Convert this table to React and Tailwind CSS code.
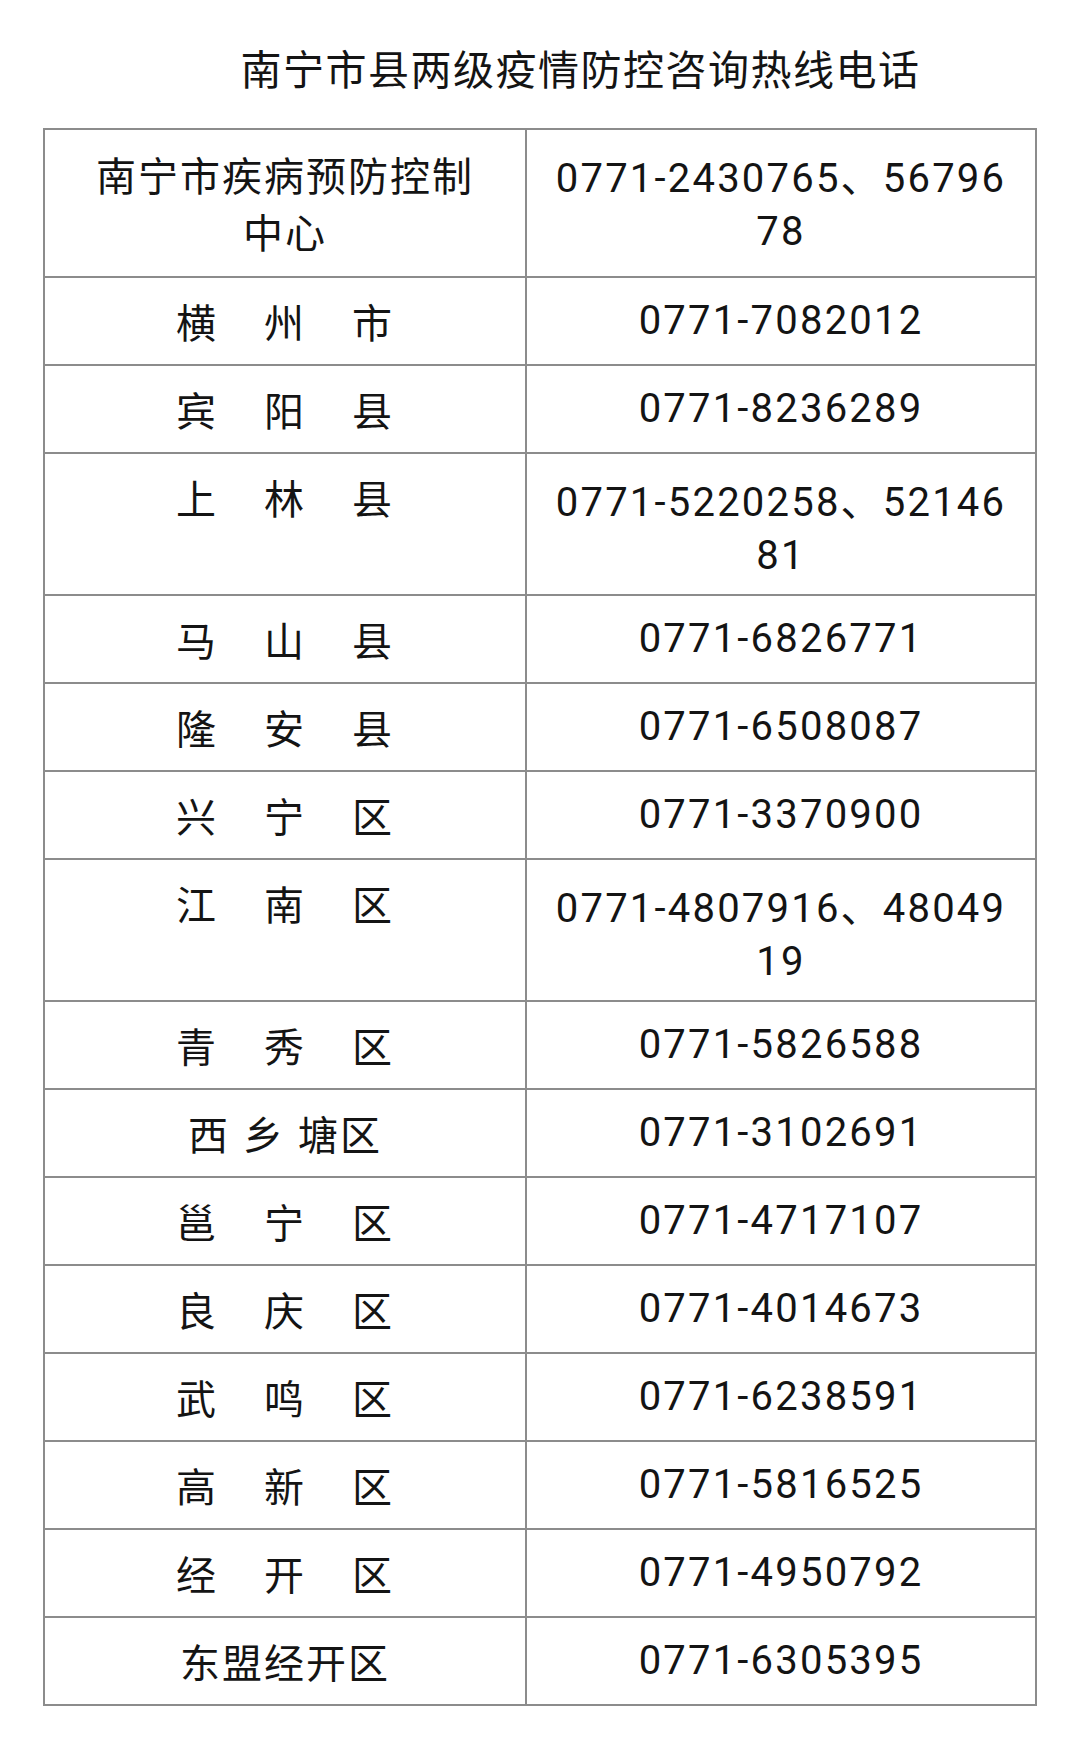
const rows = [
  { name: ['南宁市疾病预防控制中心'], phone: '0771-2430765、5679678', lead: 'leading-[57px]', wrap: true },
  { name: ['横', '州', '市'], phone: '0771-7082012' },
  { name: ['宾', '阳', '县'], phone: '0771-8236289' },
  { name: ['上', '林', '县'], phone: '0771-5220258、5214681', wrap: true },
  { name: ['马', '山', '县'], phone: '0771-6826771' },
  { name: ['隆', '安', '县'], phone: '0771-6508087' },
  { name: ['兴', '宁', '区'], phone: '0771-3370900' },
  { name: ['江', '南', '区'], phone: '0771-4807916、4804919', wrap: true },
  { name: ['青', '秀', '区'], phone: '0771-5826588' },
  { name: ['西', '乡', '塘区'], phone: '0771-3102691', tight: true },
  { name: ['邕', '宁', '区'], phone: '0771-4717107' },
  { name: ['良', '庆', '区'], phone: '0771-4014673' },
  { name: ['武', '鸣', '区'], phone: '0771-6238591' },
  { name: ['高', '新', '区'], phone: '0771-5816525' },
  { name: ['经', '开', '区'], phone: '0771-4950792' },
  { name: ['东盟经开区'], phone: '0771-6305395' },
];

const cjk = "font-['Noto_Sans_CJK_SC',sans-serif]";

const App = () => {
  return (
    <div className="min-h-[1741px] w-[1080px] bg-white text-[#141414]">
      <h1
        className={`${cjk} pl-[81px] pt-[37px] text-center text-[41px] leading-[60px] font-normal tracking-[1.5px]`}
      >
        南宁市县两级疫情防控咨询热线电话
      </h1>

      <table className="mt-[31px] ml-[43px] w-[992px] table-fixed border-collapse">
        <colgroup>
          <col className="w-[482px]" />
          <col className="w-[510px]" />
        </colgroup>
        <tbody>
          {rows.map((row) => (
            <tr key={row.phone}>
              <td
                className={`${cjk} border-2 border-[#8c8c8c] px-[40px] py-[16px] align-top text-center text-[40px] tracking-[2px] ${
                  row.lead || 'leading-[54px]'
                }`}
              >
                {row.name.length === 1 ? (
                  row.name[0]
                ) : (
                  <div
                    className={`flex justify-center ${
                      row.tight ? 'gap-[13px]' : 'gap-[46px]'
                    }`}
                  >
                    {row.name.map((part) => (
                      <span key={part}>{part}</span>
                    ))}
                  </div>
                )}
              </td>
              <td
                className={`border-2 border-[#8c8c8c] px-[24px] align-top text-center font-['Roboto','Noto_Sans_CJK_SC',sans-serif] text-[40px] tracking-[2.2px] break-all ${
                  row.wrap
                    ? 'pt-[22px] pb-[12px] leading-[53px]'
                    : 'py-[16px] leading-[54px]'
                }`}
              >
                {row.phone}
              </td>
            </tr>
          ))}
        </tbody>
      </table>
    </div>
  );
};

export default App;
